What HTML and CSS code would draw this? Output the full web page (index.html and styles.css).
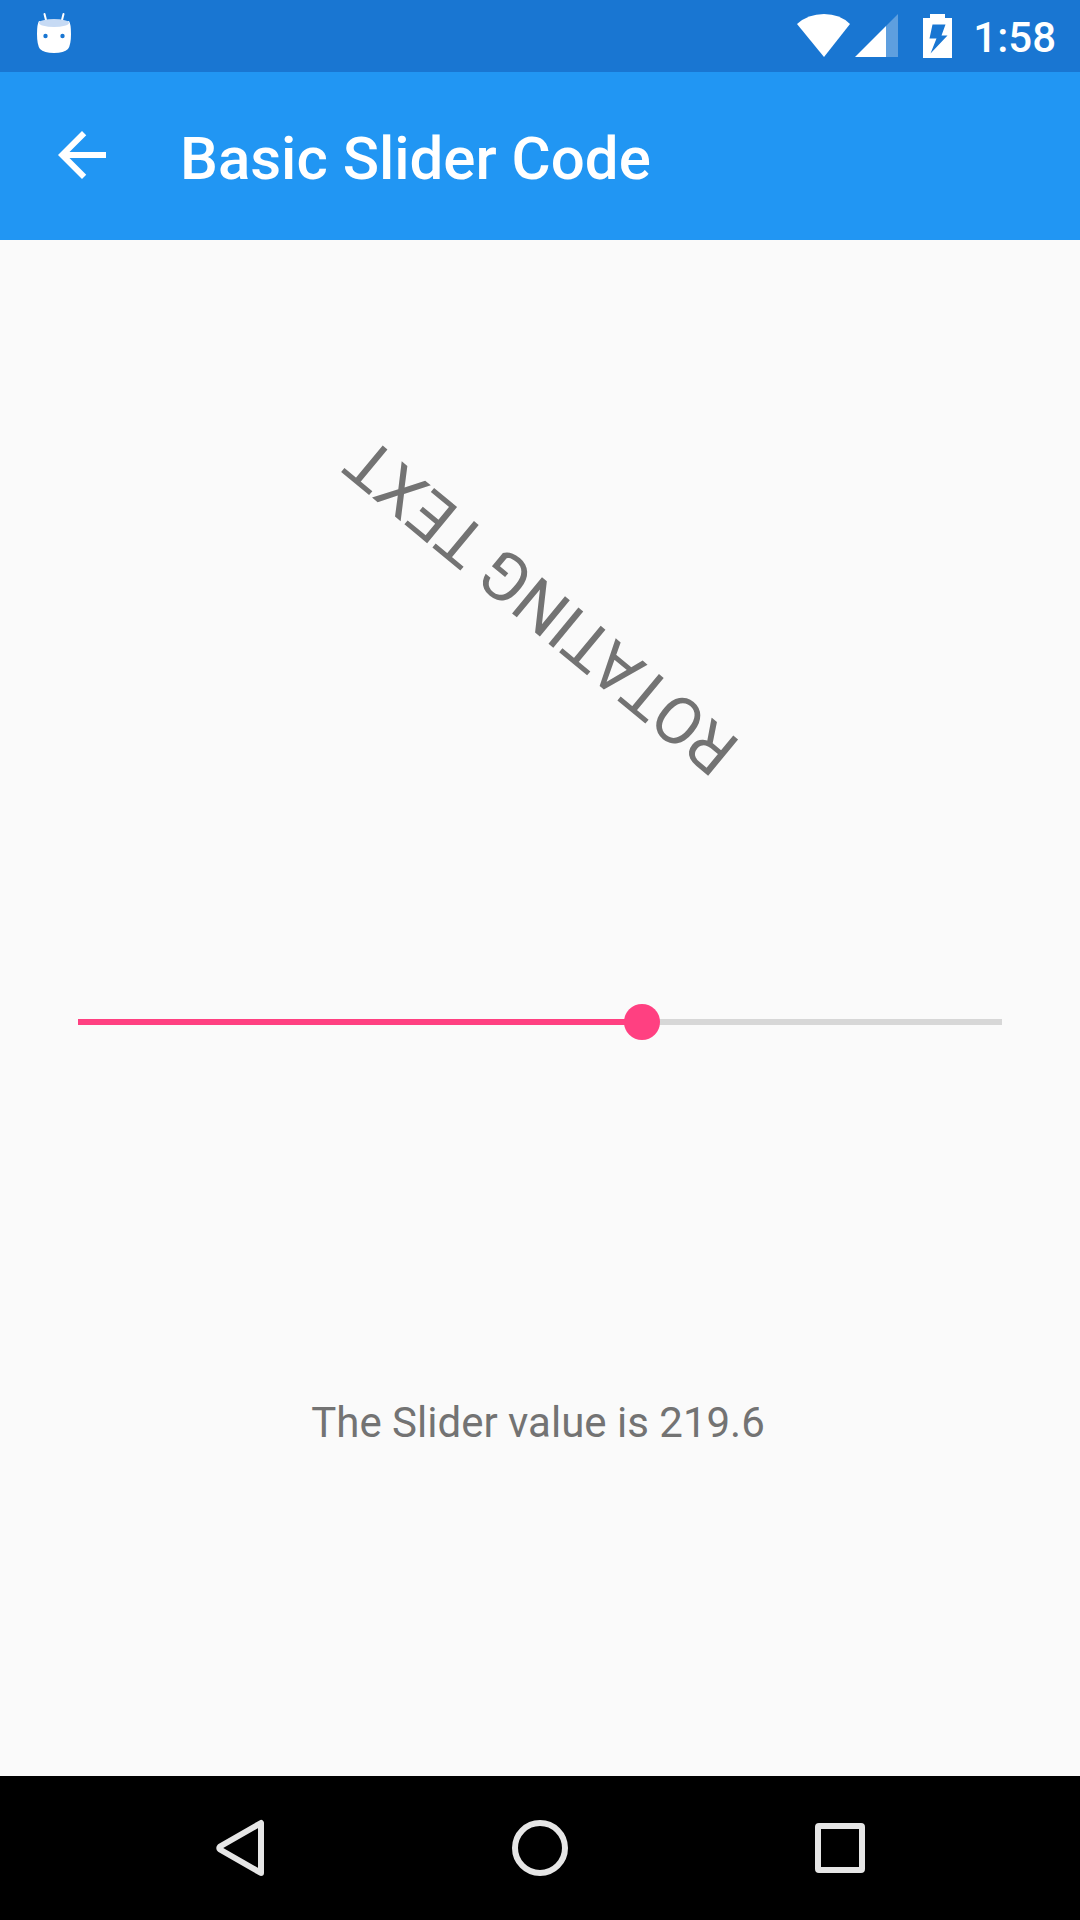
FILE: index.html
```html
<!DOCTYPE html>
<html lang="en">
<head>
<meta charset="utf-8">
<meta name="viewport" content="width=device-width, initial-scale=1">
<title>Basic Slider Code</title>
<link rel="stylesheet" href="styles.css">
</head>
<body>
<div class="screen">
  <div class="status-bar">
    <svg class="debug-icon" viewBox="0 0 36 42" width="36" height="42" aria-hidden="true">
      <path d="M8.500 2L10.500 10M27.500 2L25.500 10" stroke="#fff" stroke-width="2" stroke-linecap="round"/>
      <path d="M3 9Q18 14 33 9Q35 12 35 22Q35 33 32 37Q28 41 18 41Q8 41 4 37Q1 33 1 22Q1 12 3 9Z" fill="#fff"/>
      <ellipse cx="18" cy="11" rx="15" ry="4" fill="#c6daf4"/>
      <circle cx="9.500" cy="24" r="2.200" fill="#1976d2"/>
      <circle cx="26.500" cy="24" r="2.200" fill="#1976d2"/>
    </svg>
    <div class="status-icons">
      <svg viewBox="0 0 54 44" width="54" height="44" aria-hidden="true">
        <path d="M0 10Q11 0 27 0Q43 0 53 10L27 43Z" fill="#fff"/>
      </svg>
      <svg viewBox="0 0 44 44" width="44" height="44" aria-hidden="true">
        <path d="M43 0V43H31V12Z" fill="#fff" opacity=".3"/>
        <path d="M0 43L31 12V43Z" fill="#fff"/>
      </svg>
      <svg class="battery-icon" viewBox="0 0 29 44" width="29" height="44" aria-hidden="true">
        <path fill-rule="evenodd" d="M7 0H22V4H29V44H0V4H7ZM9.500 10.500L6.500 24.500H13.500L7.500 39.500L24.500 21.500H18.500L22.500 10.500Z" fill="#fff"/>
      </svg>
    </div>
    <time class="clock">1:58</time>
  </div>
  <header class="app-bar">
    <button class="back-button" type="button" aria-label="Back">
      <svg viewBox="0 0 24 24" width="72" height="72" aria-hidden="true">
        <path d="M20 11H7.830l5.590-5.590L12 4l-8 8 8 8 1.410-1.410L7.830 13H20v-2z" fill="#fff"/>
      </svg>
    </button>
    <h1 class="title">Basic Slider Code</h1>
  </header>
  <main class="content">
    <div class="label-area">
      <span class="rotating" style="--angle: 219.6deg">ROTATING TEXT</span>
    </div>
    <div class="slider-area">
      <input class="slider" id="angle" type="range" min="0" max="360" step="0.1" value="219.6" aria-label="Rotation" style="--ratio: 0.61">
    </div>
    <div class="label-area">
      <output class="value" for="angle">The Slider value is 219.6</output>
    </div>
  </main>
  <nav class="nav-bar" aria-label="System">
    <button class="nav-button" type="button" aria-label="Back">
      <svg viewBox="0 0 60 60" width="60" height="60" aria-hidden="true">
        <path d="M51 5V55L10 31.500Q8.500 30 10 28.500Z" class="nav-stroke"/>
      </svg>
    </button>
    <button class="nav-button" type="button" aria-label="Home">
      <svg viewBox="0 0 60 60" width="60" height="60" aria-hidden="true">
        <circle cx="30" cy="30" r="25" class="nav-stroke"/>
      </svg>
    </button>
    <button class="nav-button" type="button" aria-label="Recent apps">
      <svg viewBox="0 0 60 60" width="60" height="60" aria-hidden="true">
        <rect x="8" y="8" width="44" height="44" rx="1" class="nav-stroke"/>
      </svg>
    </button>
  </nav>
</div>
</body>
</html>
```
FILE: styles.css
```css
* {
  box-sizing: border-box;
}

body {
  margin: 0;
  background: #fafafa;
  font-family: Roboto, "Liberation Sans", sans-serif;
}

svg {
  display: block;
}

button {
  border: 0;
  padding: 0;
  background: none;
}

.screen {
  display: flex;
  flex-direction: column;
  min-height: 100vh;
}

.status-bar {
  display: flex;
  align-items: center;
  height: 72px;
  padding: 0 24px 0 36px;
  background: #1976d2;
}

.debug-icon {
  margin-bottom: 6px;
}

.status-icons {
  display: flex;
  gap: 4px;
  margin-left: auto;
}

.battery-icon {
  margin-left: 20px;
}

.clock {
  margin-left: 21px;
  padding-top: 4px;
  color: #fff;
  font-size: 42px;
  font-weight: 500;
  line-height: 48px;
}

.app-bar {
  display: flex;
  align-items: center;
  height: 168px;
  background: #2196f3;
}

.back-button {
  display: flex;
  align-items: center;
  justify-content: center;
  width: 164px;
  height: 168px;
  padding-bottom: 2px;
}

.title {
  margin: 0;
  padding: 6px 16px 0;
  color: #fff;
  font-size: 60px;
  font-weight: 500;
  line-height: 72px;
}

.content {
  display: flex;
  flex: 1;
  flex-direction: column;
}

.label-area {
  display: flex;
  flex: 1 1 auto;
  align-items: center;
  justify-content: center;
  color: #737373;
}

.rotating {
  padding-top: 8px;
  font-size: 66px;
  line-height: 70px;
  transform: rotate(var(--angle));
}

.value {
  padding: 2px 4px 0 0;
  font-size: 42px;
  line-height: 48px;
}

.slider-area {
  display: flex;
  align-items: center;
  height: 90px;
  padding: 0 60px;
}

.slider {
  --fill: calc(18px + (100% - 36px) * var(--ratio));
  flex: 1;
  height: 36px;
  margin: 0;
  appearance: none;
  background: linear-gradient(to right, transparent 18px, #ff4081 18px var(--fill), #d7d7d7 var(--fill) calc(100% - 18px), transparent calc(100% - 18px)) center / 100% 6px no-repeat;
}

.slider::-webkit-slider-thumb {
  width: 36px;
  height: 36px;
  border: 0;
  border-radius: 50%;
  appearance: none;
  background: #ff4081;
}

.nav-bar {
  display: flex;
  height: 144px;
  padding: 0 90px;
  background: #000;
}

.nav-button {
  display: flex;
  flex: 1;
  align-items: center;
  justify-content: center;
}

.nav-stroke {
  fill: none;
  stroke: #e6e6e6;
  stroke-width: 6;
  stroke-linejoin: round;
}
```
